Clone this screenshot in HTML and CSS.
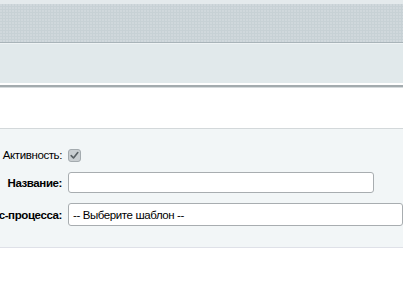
FILE: index.html
```html
<!DOCTYPE html>
<html lang="ru">
<head>
<meta charset="utf-8">
<title>Шаблон</title>
<link rel="stylesheet" href="styles.css">
</head>
<body>
<div class="topstrip"></div>
<div class="header"></div>
<div class="toolbar"></div>
<div class="toolbar-edge"></div>
<div class="spacer"></div>
<div class="panel">
  <div class="form">
    <div class="label">Активность:</div>
    <div class="control">
      <svg class="check" width="13" height="13" viewBox="0 0 13 13">
        <rect x="0.5" y="0.5" width="12" height="12" rx="2.5" fill="#c9ced1" stroke="#a4abaf"/>
        <path d="M3.2 6.6 L5.5 9 L9.8 3.6" fill="none" stroke="#596064" stroke-width="1.6" stroke-linecap="round" stroke-linejoin="round"/>
      </svg>
    </div>
    <div class="label bold">Название:</div>
    <div class="control"><input class="text-input" type="text"></div>
    <div class="label bold">Шаблон бизнес-процесса:</div>
    <div class="control"><select class="select"><option>-- Выберите шаблон --</option></select></div>
  </div>
</div>
</body>
</html>
```
FILE: styles.css
```css
html, body {
  margin: 0;
  padding: 0;
  background: #ffffff;
  overflow: hidden;
  font-family: "Liberation Sans", Arial, sans-serif;
  font-size: 11.5px;
  letter-spacing: -0.4px;
  color: #000;
}
.topstrip {
  height: 4px;
  background: #e4eaec;
}
.header {
  height: 38px;
  background-color: #c7d1d5;
  background-image:
    radial-gradient(circle at 1px 1px, rgba(255,255,255,0.16) 0.8px, transparent 1px);
  background-size: 3px 3px;
  border-bottom: 1px solid #a9b4b9;
}
.toolbar {
  height: 39px;
  background: #e1e9eb;
  border-top: 1px solid #eef3f4;
}
.toolbar-edge {
  height: 2px;
  background: #ffffff;
  border-bottom: 2px solid #a3abae;
  box-shadow: 0 1px 0 #d6dbdd;
}
.spacer {
  height: 41px;
}
.panel {
  background: #f2f6f7;
  border-top: 1px solid #d3d8da;
  border-bottom: 1px solid #dfe1e8;
  padding: 19px 0 21px 0;
}
.form {
  display: grid;
  grid-template-columns: 62px 1fr;
  column-gap: 6px;
  row-gap: 10px;
  align-items: center;
}
.label {
  display: flex;
  justify-content: flex-end;
  white-space: nowrap;
  color: #000;
}
.label.bold {
  font-weight: bold;
}
.control {
  display: flex;
  align-items: center;
  min-width: 0;
}
.check {
  display: block;
  margin-top: 1px;
}
.text-input {
  box-sizing: border-box;
  width: 306px;
  height: 21px;
  border: 1px solid #a8adb0;
  border-radius: 3px;
  background: #ffffff;
  margin: 0;
  padding: 0 5px;
  font: inherit;
}
.select {
  -webkit-appearance: none;
  appearance: none;
  box-sizing: border-box;
  width: 360px;
  height: 23px;
  border: 1px solid #a8adb0;
  border-radius: 3px;
  background: #ffffff;
  margin: 0;
  padding: 0 4px;
  font: inherit;
  letter-spacing: -0.4px;
  color: #000;
}
```
